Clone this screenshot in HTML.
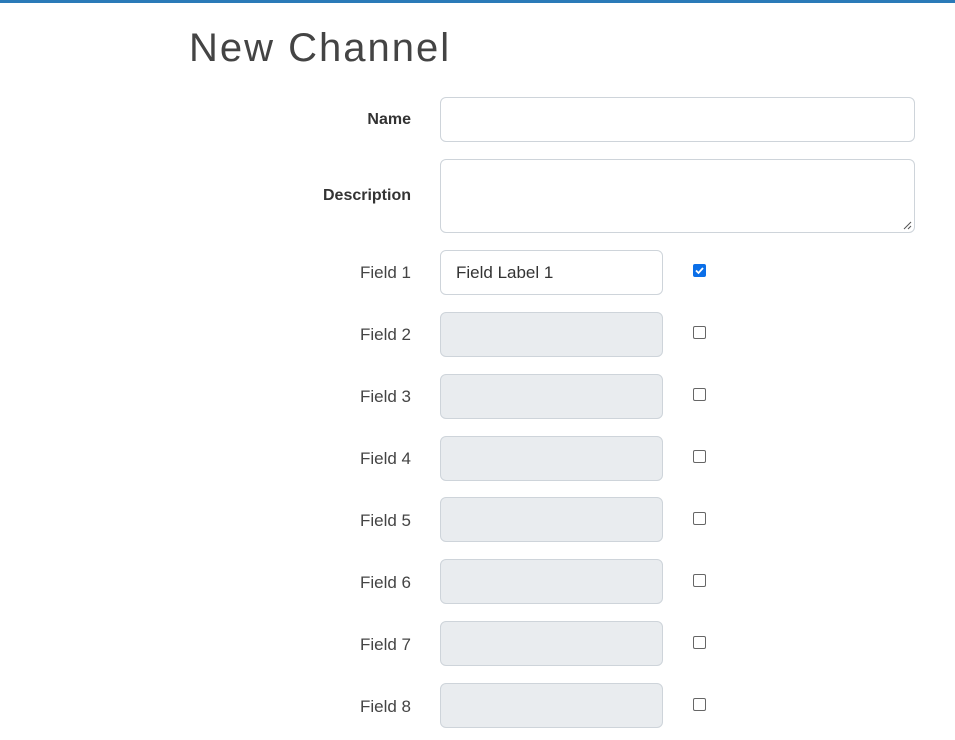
<!DOCTYPE html>
<html><head><style>
body{margin:0;width:955px;height:740px;overflow:hidden;background:#fff;font-family:"Liberation Sans",sans-serif;position:relative}
.bar{position:absolute;left:0;top:0;width:955px;height:3px;background:#2a7ab8}
h1{position:absolute;left:189px;top:26px;margin:0;font-weight:300;font-size:40px;color:#444;letter-spacing:2px}
.l{position:absolute;right:544px;font-size:17px;color:#444;text-align:right}
.b{font-weight:bold;color:#333;font-size:16px}
.i{position:absolute;box-sizing:border-box;border:1px solid #ced4da;border-radius:6px;background:#fff}
.d{background:#e9ecef}
.c{position:absolute;left:693px;width:13px;height:13px;box-sizing:border-box;border:1px solid #666;border-radius:2px;background:#fff}
.k{background:#0b6fe8;border-color:#0b6fe8}
</style></head><body>
<div class="bar"></div>
<h1>New Channel</h1>
<div class="l b" style="top:111px">Name</div>
<div class="i" style="left:440px;top:97px;width:475px;height:45px"></div>
<div class="l b" style="top:187px">Description</div>
<div class="i" style="left:440px;top:159px;width:475px;height:74px"><svg style="position:absolute;right:2px;bottom:2px" width="10" height="10"><path d="M9 2L2 9M9 6L6 9" stroke="#555" stroke-width="1"/></svg></div>

<div class="l" style="top:263px">Field 1</div>
<div class="i" style="left:440px;top:250px;width:223px;height:45px;font-size:17px;color:#333;padding:12px 0 0 15px">Field Label 1</div>
<div class="c k" style="top:264px"><svg width="11" height="11" style="position:absolute;left:0;top:0"><path d="M2 5.5L4.5 8L9 3" stroke="#fff" stroke-width="1.8" fill="none"/></svg></div>

<div class="l" style="top:325px">Field 2</div><div class="i d" style="left:440px;top:312px;width:223px;height:45px"></div><div class="c" style="top:326px"></div>
<div class="l" style="top:387px">Field 3</div><div class="i d" style="left:440px;top:374px;width:223px;height:45px"></div><div class="c" style="top:388px"></div>
<div class="l" style="top:449px">Field 4</div><div class="i d" style="left:440px;top:436px;width:223px;height:45px"></div><div class="c" style="top:450px"></div>
<div class="l" style="top:511px">Field 5</div><div class="i d" style="left:440px;top:497px;width:223px;height:45px"></div><div class="c" style="top:512px"></div>
<div class="l" style="top:573px">Field 6</div><div class="i d" style="left:440px;top:559px;width:223px;height:45px"></div><div class="c" style="top:574px"></div>
<div class="l" style="top:635px">Field 7</div><div class="i d" style="left:440px;top:621px;width:223px;height:45px"></div><div class="c" style="top:636px"></div>
<div class="l" style="top:697px">Field 8</div><div class="i d" style="left:440px;top:683px;width:223px;height:45px"></div><div class="c" style="top:698px"></div>
</body></html>
